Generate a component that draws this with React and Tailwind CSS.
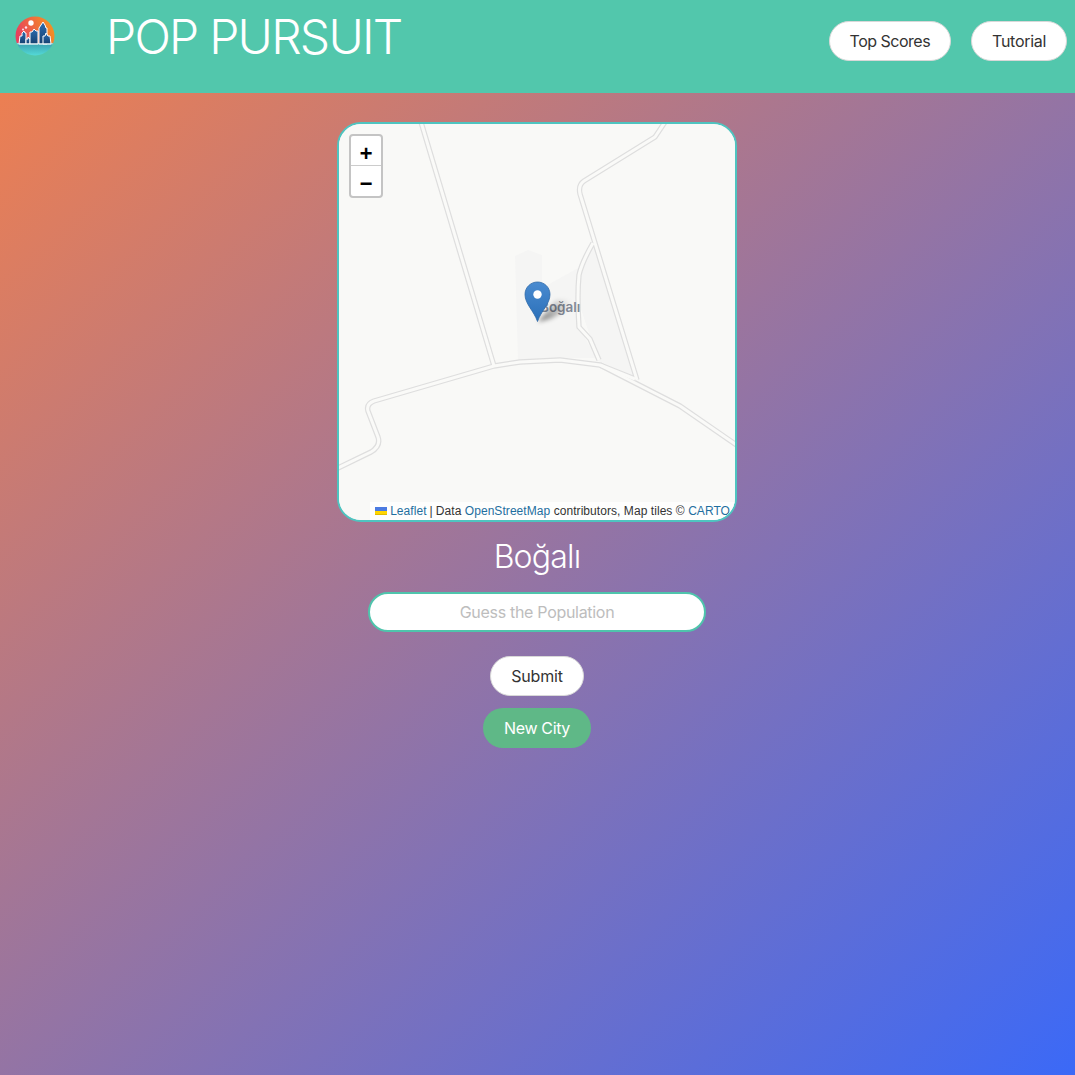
import React from "react";

const roads = [
  "M421 122 L494 366",
  "M665 122 L655 137 L584 181 Q578 185 580 194 L637 380",
  "M593 243 Q582 262 579 275 Q577 295 579 327 L590 339 L599 360",
  "M600 365 L635 379",
  "M338 468 L371 452 Q381 446 378 437 L368 411 Q366 404 374 401 L494 366 L520 362 L560 360 L600 365 L680 406 L738 446",
];

function MapArt() {
  return (
    <svg className="block w-full h-full" viewBox="339 124 396 396">
      <defs>
        <linearGradient id="pin" x1="0" y1="0" x2="0" y2="1">
          <stop offset="0" stopColor="#4a8bd0" />
          <stop offset="1" stopColor="#2a6fb8" />
        </linearGradient>
        <linearGradient id="shadow" x1="0" y1="1" x2="1" y2="0">
          <stop offset="0" stopColor="#000" stopOpacity="0.5" />
          <stop offset="1" stopColor="#000" stopOpacity="0" />
        </linearGradient>
        <filter id="blur" x="-30%" y="-30%" width="160%" height="160%">
          <feGaussianBlur stdDeviation="2" />
        </filter>
      </defs>
      <rect x="339" y="124" width="396" height="396" fill="#f9f9f7" />
      <path d="M515 256 L528 250 L542 255 L542 288 L578 268 L578 300 L580 330 L597 358 L560 358 L518 360 Z" fill="#f5f5f4" />
      <path d="M593 243 L634 376 L600 362 L590 336 L578 300 L580 265 Z" fill="#f5f5f4" />
      {roads.map((d) => (
        <path key={d} d={d} fill="none" stroke="#dedede" strokeWidth="5.4" strokeLinejoin="round" />
      ))}
      {roads.map((d) => (
        <path key={d + "i"} d={d} fill="none" stroke="#fafaf8" strokeWidth="3" strokeLinejoin="round" />
      ))}
      <text x="540" y="312" fontFamily="Inter, sans-serif" fontSize="13.5" fontWeight="600" fill="#838a97">Boğalı</text>
      <path d="M538 322 L556 300 L570 300 Q568 311 550 319 Z" fill="url(#shadow)" filter="url(#blur)" />
      <path d="M537.5 321.5 C534 311 525 304 525 294.5 C525 287 531 282 537.5 282 C544 282 550 287 550 294.5 C550 304 541 311 537.5 321.5 Z" fill="url(#pin)" stroke="#2e6aa8" strokeWidth="0.8" />
      <circle cx="537.5" cy="294.5" r="4.2" fill="#fff" />
    </svg>
  );
}

function Logo() {
  return (
    <svg width="40" height="40" viewBox="0 0 40 40" className="shrink-0">
      <defs>
        <linearGradient id="sky" x1="0" y1="0.5" x2="1" y2="0.2">
          <stop offset="0" stopColor="#e8405f" />
          <stop offset="1" stopColor="#f59a1c" />
        </linearGradient>
        <linearGradient id="sea" x1="0" y1="0" x2="0" y2="1">
          <stop offset="0" stopColor="#3a9fb0" />
          <stop offset="1" stopColor="#55dcd8" />
        </linearGradient>
        <linearGradient id="tower" x1="0" y1="0" x2="0" y2="1">
          <stop offset="0" stopColor="#2b6cb0" />
          <stop offset="1" stopColor="#16406f" />
        </linearGradient>
        <clipPath id="disc"><circle cx="20" cy="20" r="19.5" /></clipPath>
      </defs>
      <g clipPath="url(#disc)">
        <rect width="40" height="28" fill="url(#sky)" />
        <rect y="27" width="40" height="13" fill="url(#sea)" />
        <g fill="url(#tower)" stroke="#fff" strokeWidth="1" strokeLinejoin="miter">
          <path d="M4 28 L5 20 L7 20 L7 17 L9 15 L10 17 L11 17 L11 28 Z" />
          <path d="M11 28 L11 23 L13 23 L13 21 L15 23 L15 28 Z" />
          <path d="M15 28 L15 16 L17 16 L19 13 L21 15 L23 15 L23 28 Z" />
          <path d="M24 28 L24 12 L26 9 L28 6 L30 9 L31 12 L32 12 L32 28 Z" />
          <path d="M28 28 L28 20 L30 20 L31 17 L33 20 L35 20 L36 28 Z" />
        </g>
        <rect x="0" y="27.5" width="40" height="0.8" fill="#e8f6f7" />
        <circle cx="16" cy="7" r="2.7" fill="#fff" />
        <circle cx="11" cy="11.5" r="1.2" fill="#fde" />
        <circle cx="8" cy="13.5" r="1" fill="#fde" />
      </g>
    </svg>
  );
}

const pill = "h-10 rounded-[20px] border border-[#d8d8d8] bg-white px-5 text-base text-[#333] shrink-0";

export default function App() {
  return (
    <div className="flex min-h-[1075px] flex-col font-['Inter','Liberation_Sans',sans-serif]">
      <header className="flex h-[93px] items-start bg-[#52c7ac] pl-[15px] pr-2">
        <div className="mt-[16px]"><Logo /></div>
        <h1 className="ml-[51px] mt-[8px] text-[48px] font-light leading-[58px] tracking-[-1.75px] text-white">POP PURSUIT</h1>
        <nav className="ml-auto mt-[21px] flex gap-5">
          <button className={pill + " tracking-[-0.5px]"}>Top Scores</button>
          <button className={pill + " tracking-[-0.3px]"}>Tutorial</button>
        </nav>
      </header>
      <main className="flex flex-1 flex-col items-center bg-[linear-gradient(to_bottom_right,#ec7f52,#3b69f7)] pr-px pt-[29px]">
        <div className="relative h-[400px] w-[400px] overflow-hidden rounded-[24px] border-2 border-[#4fc4c0] bg-[#f9f9f7]">
          <MapArt />
          <div className="absolute left-[10px] top-[10px] flex h-[64px] w-[34px] flex-col rounded border-2 border-[#c4c4c4] bg-white font-['Liberation_Mono',monospace] text-[22px] font-bold text-black">
            <span className="flex h-[30px] items-center justify-center rounded-t-sm border-b border-[#ccc] pt-[10px]">+</span>
            <span className="flex h-[30px] items-center justify-center pt-[8px]">−</span>
          </div>
          <div className="absolute bottom-0 right-0 flex h-[18px] items-center whitespace-nowrap bg-white/80 pl-[5px] pr-[5px] font-['Liberation_Sans',sans-serif] text-xs tracking-[0.06px] text-[#333]">
            <svg width="12" height="8" viewBox="0 0 12 8" className="mr-[3px]">
              <rect width="12" height="4" fill="#4C7BE1" />
              <rect y="4" width="12" height="3" fill="#FFD500" />
              <rect y="7" width="12" height="1" fill="#E0BC00" />
            </svg>
            <span className="text-[#1f6f9f]">Leaflet</span>
            <span className="mx-[3px]">|</span>
            <span>Data&nbsp;</span>
            <span className="text-[#1f6f9f]">OpenStreetMap</span>
            <span>&nbsp;contributors, Map tiles ©&nbsp;</span>
            <span className="text-[#1f6f9f]">CARTO</span>
          </div>
        </div>
        <h2 className="mt-[15px] text-[32px] font-light leading-[40px] tracking-[-0.8px] text-white">Boğalı</h2>
        <input
          placeholder="Guess the Population"
          className="mt-[15px] h-10 w-[338px] rounded-[20px] border-2 border-[#4fc4ac] bg-white text-center text-base tracking-[-0.3px] text-[#333] placeholder:text-[#bdbdbd]"
        />
        <button className="mt-[24px] h-10 rounded-[20px] border border-[#d8d8d8] bg-white px-5 text-base tracking-[-0.2px] text-[#333]">Submit</button>
        <button className="mt-3 h-10 rounded-[20px] bg-[#5fb887] px-[21px] text-base tracking-[-0.35px] text-white">New City</button>
      </main>
    </div>
  );
}
